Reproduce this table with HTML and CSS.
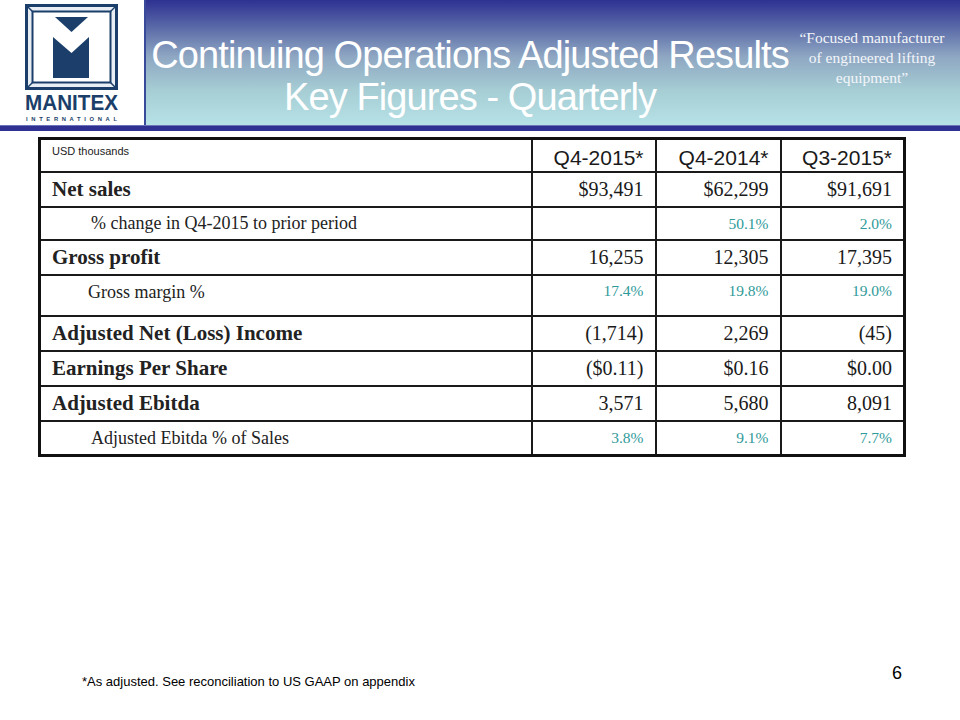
FILE: index.html
```html
<!DOCTYPE html>
<html>
<head>
<meta charset="utf-8">
<link rel="stylesheet" href="styles.css">
</head>
<body>
<div class="page">
  <header class="header">
    <div class="logo">
      <svg width="144" height="125" viewBox="0 0 144 125">
        <rect x="26.5" y="5.5" width="90" height="83" fill="#e9eef4" stroke="#1b3f6a" stroke-width="3"/>
        <rect x="32.5" y="11.5" width="78" height="71" fill="#ffffff" stroke="#1b3f6a" stroke-width="2"/>
        <line x1="27" y1="6" x2="33" y2="12" stroke="#1b3f6a" stroke-width="1.5"/>
        <line x1="116" y1="6" x2="110" y2="12" stroke="#1b3f6a" stroke-width="1.5"/>
        <line x1="27" y1="88" x2="33" y2="82" stroke="#1b3f6a" stroke-width="1.5"/>
        <line x1="116" y1="88" x2="110" y2="82" stroke="#1b3f6a" stroke-width="1.5"/>
        <polygon points="55,17 88,17 71.5,32" fill="#1b3f6a"/>
        <polygon points="53,37 71.5,53 89,37 89,78 53,78" fill="#1b3f6a"/>
        <text x="25" y="110" class="logo-name" textLength="93" lengthAdjust="spacingAndGlyphs">MANITEX</text>
        <text x="26" y="121" class="logo-sub" textLength="91" lengthAdjust="spacing">INTERNATIONAL</text>
      </svg>
    </div>
    <div class="banner">
      <h1 class="title">Continuing Operations Adjusted Results<br>Key Figures - Quarterly</h1>
      <p class="tagline">“Focused manufacturer of engineered lifting equipment”</p>
    </div>
  </header>
  <div class="rule"></div>

  <table class="figures">
    <colgroup>
      <col class="c-label"><col class="c-num"><col class="c-num2"><col class="c-num">
    </colgroup>
    <tr class="row-head">
      <td class="unit">USD thousands</td>
      <td class="qh">Q4-2015*</td>
      <td class="qh">Q4-2014*</td>
      <td class="qh">Q3-2015*</td>
    </tr>
    <tr class="row-main">
      <td class="lbl">Net sales</td>
      <td class="num">$93,491</td>
      <td class="num">$62,299</td>
      <td class="num">$91,691</td>
    </tr>
    <tr class="row-sub r33">
      <td class="sub">% change in Q4-2015 to prior period</td>
      <td class="pct"></td>
      <td class="pct">50.1%</td>
      <td class="pct">2.0%</td>
    </tr>
    <tr class="row-main">
      <td class="lbl">Gross profit</td>
      <td class="num">16,255</td>
      <td class="num">12,305</td>
      <td class="num">17,395</td>
    </tr>
    <tr class="row-sub r41">
      <td class="sub sub2">Gross margin %</td>
      <td class="pct">17.4%</td>
      <td class="pct">19.8%</td>
      <td class="pct">19.0%</td>
    </tr>
    <tr class="row-main">
      <td class="lbl">Adjusted Net (Loss) Income</td>
      <td class="num">(1,714)</td>
      <td class="num">2,269</td>
      <td class="num">(45)</td>
    </tr>
    <tr class="row-main">
      <td class="lbl">Earnings Per Share</td>
      <td class="num">($0.11)</td>
      <td class="num">$0.16</td>
      <td class="num">$0.00</td>
    </tr>
    <tr class="row-main">
      <td class="lbl">Adjusted Ebitda</td>
      <td class="num">3,571</td>
      <td class="num">5,680</td>
      <td class="num">8,091</td>
    </tr>
    <tr class="row-sub r34">
      <td class="sub">Adjusted Ebitda % of Sales</td>
      <td class="pct">3.8%</td>
      <td class="pct">9.1%</td>
      <td class="pct">7.7%</td>
    </tr>
  </table>

  <footer class="footer">
    <p class="note">*As adjusted. See reconciliation to US GAAP on appendix</p>
    <span class="pageno">6</span>
  </footer>
</div>
</body>
</html>
```

FILE: styles.css
```css
html, body {
  margin: 0;
  padding: 0;
  background: #ffffff;
}

.page {
  width: 960px;
  height: 720px;
  display: flex;
  flex-direction: column;
  overflow: hidden;
}

.header {
  display: flex;
  height: 125px;
}

.logo {
  width: 144px;
  height: 125px;
  background: #ffffff;
}

.logo svg {
  display: block;
}

.logo-name {
  font-family: "Liberation Sans", Arial, sans-serif;
  font-weight: 700;
  font-size: 22px;
  fill: #1b3f6a;
}

.logo-sub {
  font-family: "Liberation Sans", Arial, sans-serif;
  font-weight: 700;
  font-size: 5.8px;
  fill: #1b3f6a;
}

.banner {
  flex: 1;
  display: flex;
  background: linear-gradient(180deg, #2e3192 0%, #5a6aa8 22%, #8ea6c2 45%, #a6cdd4 72%, #b6e2e7 100%);
  border-left: 2px solid #3a4a9a;
}

.title {
  flex: 1;
  margin: 0;
  padding-top: 34px;
  text-align: center;
  font-family: "Liberation Sans", Arial, sans-serif;
  font-weight: 400;
  font-size: 38px;
  line-height: 42px;
  letter-spacing: -0.9px;
  color: #ffffff;
}

.tagline {
  width: 156px;
  margin: 28px 10px 0 0;
  text-align: center;
  font-family: "Liberation Serif", "Times New Roman", serif;
  font-size: 15.5px;
  line-height: 20px;
  color: #f4f6fa;
}

.rule {
  height: 5px;
  background: #2e3192;
  border-top: 1px solid #6b74b8;
}

.figures {
  margin: 6px 0 0 38px;
  width: 867px;
  border-collapse: collapse;
  border: 3px solid #111111;
  table-layout: fixed;
}

.c-label { width: 492px; }
.c-num { width: 124px; }
.c-num2 { width: 125px; }

.figures td {
  border: 2px solid #1a1a1a;
  padding: 0 11px;
  height: 33px;
  vertical-align: middle;
  color: #1a1a1a;
}

.figures .r33 td { height: 31px; }
.figures .r41 td { height: 33px; padding-top: 6px; vertical-align: top; }
.figures .r34 td { height: 32px; }

.figures .unit {
  vertical-align: top;
  padding-top: 5px;
  height: 26px;
  font-family: "Liberation Sans", Arial, sans-serif;
  font-size: 11px;
}

.figures .qh {
  text-align: right;
  padding-top: 4px;
  height: 27px;
  font-family: "Liberation Sans", Arial, sans-serif;
  font-size: 21px;
}

.figures .lbl {
  font-family: "Liberation Serif", "Times New Roman", serif;
  font-weight: 700;
  font-size: 21px;
  color: #222222;
}

.figures .sub {
  padding-left: 50px;
  font-family: "Liberation Serif", "Times New Roman", serif;
  font-size: 18px;
  color: #222222;
}

.figures .sub2 {
  padding-left: 47px;
}

.figures .num {
  text-align: right;
  font-family: "Liberation Serif", "Times New Roman", serif;
  font-size: 20px;
}

.figures .pct {
  text-align: right;
  font-family: "Liberation Serif", "Times New Roman", serif;
  font-size: 15.5px;
  color: #2f9a9a;
}

.footer {
  margin-top: auto;
  display: flex;
  justify-content: space-between;
  padding: 0 58px 31px 82px;
}

.note {
  margin: 0;
  align-self: flex-end;
  font-family: "Liberation Sans", Arial, sans-serif;
  font-size: 13px;
  color: #000000;
}

.pageno {
  margin-bottom: 5px;
  font-family: "Liberation Sans", Arial, sans-serif;
  font-size: 18px;
  color: #000000;
}
```
